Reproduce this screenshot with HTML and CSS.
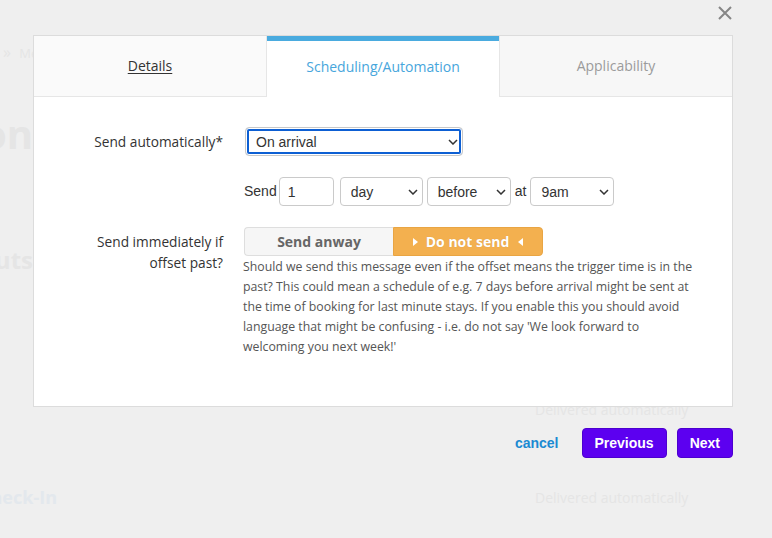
FILE: index.html
```html
<!DOCTYPE html>
<html lang="en">
<head>
<meta charset="utf-8">
<title>Scheduling/Automation</title>
<link rel="stylesheet" href="styles.css">
</head>
<body>
<div class="page">
  <div class="crumbs"><span class="raquo">»</span> Messages</div>
  <div class="title"><span>Automation</span></div>
  <div class="section"><span>Shortcuts</span></div>
  <div class="msg-row first">
    <div class="msg-name"></div>
    <div class="msg-status">Delivered automatically</div>
  </div>
  <div class="msg-row">
    <div class="msg-name"><span>Online Check-In</span></div>
    <div class="msg-status">Delivered automatically</div>
  </div>
</div>

<div class="overlay">
  <button class="close" aria-label="Close">
    <svg width="14" height="14" viewBox="0 0 14 14"><path d="M1 1 L13 13 M13 1 L1 13" stroke="#868686" stroke-width="2" fill="none"/></svg>
  </button>
  <div class="dialog">
    <div class="panel">
      <div class="tabs">
        <div class="tab tab-left"><a class="tab-link">Details</a></div>
        <div class="tab tab-active">Scheduling/Automation</div>
        <div class="tab tab-right">Applicability</div>
      </div>
      <div class="body">
        <div class="row">
          <div class="label">Send automatically*</div>
          <div class="control">
            <div class="select-wrap wide focus">
              <select class="select"><option>On arrival</option></select>
              <svg class="chev" width="10" height="6" viewBox="0 0 10 6"><path d="M1 1 L5 5 L9 1" stroke="#333" stroke-width="1.5" fill="none"/></svg>
            </div>
          </div>
        </div>
        <div class="row">
          <div class="label"></div>
          <div class="control inline">
            <span class="word">Send</span>
            <input class="num" type="text" value="1">
            <div class="select-wrap w-day">
              <select class="select"><option>day</option></select>
              <svg class="chev" width="10" height="6" viewBox="0 0 10 6"><path d="M1 1 L5 5 L9 1" stroke="#333" stroke-width="1.5" fill="none"/></svg>
            </div>
            <div class="select-wrap w-before">
              <select class="select"><option>before</option></select>
              <svg class="chev" width="10" height="6" viewBox="0 0 10 6"><path d="M1 1 L5 5 L9 1" stroke="#333" stroke-width="1.5" fill="none"/></svg>
            </div>
            <span class="word w-at">at</span>
            <div class="select-wrap w-time">
              <select class="select"><option>9am</option></select>
              <svg class="chev" width="10" height="6" viewBox="0 0 10 6"><path d="M1 1 L5 5 L9 1" stroke="#333" stroke-width="1.5" fill="none"/></svg>
            </div>
          </div>
        </div>
        <div class="row">
          <div class="label">Send immediately if<br>offset past?</div>
          <div class="control">
            <div class="toggle">
              <button class="opt opt-off">Send anway</button>
              <button class="opt opt-on">
                <svg width="5" height="8" viewBox="0 0 5 8"><path d="M0 0 L5 4 L0 8 Z" fill="#fff"/></svg>
                <span>Do not send</span>
                <svg width="5" height="8" viewBox="0 0 5 8"><path d="M5 0 L0 4 L5 8 Z" fill="#fff"/></svg>
              </button>
            </div>
            <p class="help">Should we send this message even if the offset means the trigger time is in the past? This could mean a schedule of e.g. 7 days before arrival might be sent at the time of booking for last minute stays. If you enable this you should avoid language that might be confusing - i.e. do not say 'We look forward to welcoming you next week!'</p>
          </div>
        </div>
      </div>
    </div>
    <div class="footer">
      <button class="cancel">cancel</button>
      <button class="btn">Previous</button>
      <button class="btn">Next</button>
    </div>
  </div>
</div>
</body>
</html>
```
FILE: styles.css
```css
* { box-sizing: border-box; }
html, body { margin: 0; padding: 0; }
body {
  width: 772px;
  height: 538px;
  overflow: hidden;
  background: #efefef;
  font-family: "Open Sans", "Liberation Sans", sans-serif;
  position: relative;
}

/* faded page behind the dialog */
.page { padding-top: 44px; color: #e5e5e5; }
.crumbs { font-size: 13px; line-height: 16px; padding-left: 3px; white-space: nowrap; }
.raquo { font-size: 16px; margin-right: 5px; }
.title {
  width: 33px; display: flex; justify-content: flex-end;
  white-space: nowrap; font-weight: 700; font-size: 40px; line-height: 50px;
  margin-top: 48px;
}
.section {
  width: 33px; display: flex; justify-content: flex-end;
  white-space: nowrap; font-weight: 700; font-size: 24px; line-height: 30px;
  margin-top: 86px;
}
.msg-row { display: flex; align-items: center; height: 22px; margin-top: 66px; }
.msg-row.first { margin-top: 123px; }
.msg-name {
  width: 57px; display: flex; justify-content: flex-end; white-space: nowrap;
  font-weight: 700; font-size: 18px; color: #e3e8ed;
}
.msg-status { margin-left: 478px; font-size: 14px; white-space: nowrap; }

/* overlay */
.overlay { position: absolute; inset: 0; }
.close {
  position: absolute; top: 6px; right: 40px;
  width: 14px; height: 14px; padding: 0; border: 0; background: none;
  display: block;
}
.close svg { display: block; }
.dialog { margin: 35px 0 0 33px; width: 700px; }
.panel { background: #fff; border: 1px solid #dcdcdc; }

.tabs { display: flex; height: 61px; }
.tab {
  flex: 1; display: flex; align-items: center; justify-content: center;
  font-size: 14px; padding-bottom: 1px;
}
.tab-left { background: #fafafa; border-bottom: 1px solid #e6e6e6; border-right: 1px solid #e6e6e6; }
.tab-right { background: #f7f7f7; border-bottom: 1px solid #e6e6e6; border-left: 1px solid #e6e6e6; color: #9b9b9b; }
.tab-active { background: #fff; color: #47a6dc; box-shadow: inset 0 5px 0 #4aabdf; }
.tab-link { color: #333; text-decoration: underline; text-underline-offset: 2px; }

.body { padding: 30px 0 49px; display: flex; flex-direction: column; gap: 21px; }
.row { display: grid; grid-template-columns: 189px 1fr; column-gap: 21px; align-items: start; }
.label {
  text-align: right; font-size: 13.7px; line-height: 21px; color: #333;
  padding-top: 4px;
}
.control { min-height: 29px; }
.control.inline { display: flex; align-items: center; height: 29px; }

.select-wrap { position: relative; height: 29px; }
.select-wrap.wide { width: 218px; margin-left: 1px; }
.w-day { width: 83px; margin-left: 6px; }
.w-before { width: 84px; margin-left: 4px; }
.w-time { width: 84px; margin-left: 4px; }
.select {
  -webkit-appearance: none; appearance: none;
  width: 100%; height: 29px; margin: 0; display: block;
  border: 1px solid #cacaca; border-radius: 4px; background: #fff;
  padding: 0 20px 0 10px;
  font-family: "Liberation Sans", Arial, sans-serif; font-size: 14px; color: #333;
  outline: none;
}
.focus .select { box-shadow: inset 0 0 0 1px #fff, inset 0 0 0 3px #0d5fd3; border-color: #c8c8c8; }
.chev { position: absolute; right: 5px; top: 12px; pointer-events: none; }

.word { font-family: "Liberation Sans", Arial, sans-serif; font-size: 14px; color: #333; line-height: 20px; margin-bottom: 2px; }
.w-at { margin-left: 4px; }
.num {
  width: 55px; height: 29px; margin: 0 0 0 2px;
  border: 1px solid #cacaca; border-radius: 4px; padding: 0 8px;
  font-family: "Liberation Sans", Arial, sans-serif; font-size: 14px; color: #333;
}

.toggle { display: flex; width: 299px; height: 29px; }
.opt {
  height: 29px; margin: 0; font-family: "Open Sans", sans-serif; font-weight: 700; font-size: 14px;
  display: flex; align-items: center; justify-content: center;
}
.opt-off {
  width: 149px; background: #f6f6f6; color: #666;
  border: 1px solid #dedede; border-right: 0; border-radius: 4px 0 0 4px;
}
.opt-on {
  width: 150px; background: #f3b04f; color: #fff; gap: 8px;
  border: 1px solid #e9a543; border-radius: 0 4px 4px 0;
  text-shadow: 0 0 1px rgba(0,0,0,0.15);
}
.opt-on span { margin-right: 1px; }
.help {
  margin: 1px 0 0 -1px; width: 456px;
  font-size: 12.3px; line-height: 20px; color: #555;
}

.footer { display: flex; justify-content: flex-end; align-items: center; margin-top: 21px; }
.cancel {
  border: 0; background: none; padding: 0; margin-right: 23px;
  font-family: "Liberation Sans", Arial, sans-serif; font-weight: 700; font-size: 14px; color: #1b8ad2;
}
.btn {
  height: 30px; padding: 0 12px; margin-left: 10px;
  background: #5c00f0; border: 1px solid #4c00cf; border-radius: 4px;
  font-family: "Liberation Sans", Arial, sans-serif; font-weight: 700; font-size: 14px; color: #fff;
}
.cancel + .btn { margin-left: 0; }
```
